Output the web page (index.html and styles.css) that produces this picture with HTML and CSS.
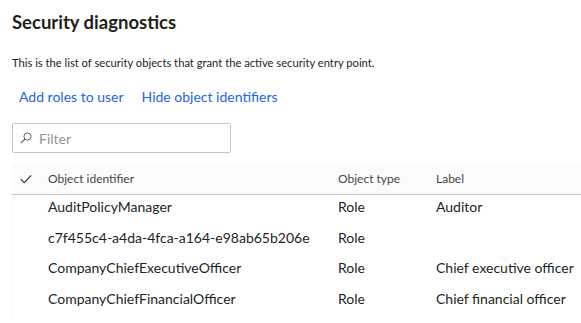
FILE: index.html
```html
<!DOCTYPE html>
<html lang="en">
  <head>
    <meta charset="UTF-8" />
    <title>Security diagnostics</title>
    <link rel="stylesheet" href="styles.css">
  </head>
  <body>
    <div class="page">
      <h1 class="title">Security diagnostics</h1>
      <p class="intro">This is the list of security objects that grant the active security entry point.</p>

      <div class="actions">
        <a class="action" href="#">Add roles to user</a>
        <a class="action" href="#">Hide object identifiers</a>
      </div>

      <label class="filter">
        <svg class="filter-icon" width="12" height="12" viewBox="0 0 12 12">
          <circle cx="7.5" cy="4.5" r="3.6" fill="none" stroke="#605e5c" stroke-width="1" />
          <path d="M5 7 L0.8 11.2" stroke="#605e5c" stroke-width="1.1" />
        </svg>
        <input type="text" placeholder="Filter" />
      </label>

      <div class="grid">
        <div class="grid-head">
          <span class="col-check">
            <svg width="12" height="10" viewBox="0 0 12 10">
              <path d="M0.8 5.2 L4.2 8.6 L11.2 1.4" fill="none" stroke="#323130" stroke-width="1.1" />
            </svg>
          </span>
          <span class="col-id">Object identifier</span>
          <span class="col-type">Object type</span>
          <span class="col-label">Label</span>
        </div>
        <div class="grid-body">
          <div class="grid-row">
            <span class="col-check"></span>
            <span class="col-id">AuditPolicyManager</span>
            <span class="col-type">Role</span>
            <span class="col-label">Auditor</span>
          </div>
          <div class="grid-row">
            <span class="col-check"></span>
            <span class="col-id">c7f455c4-a4da-4fca-a164-e98ab65b206e</span>
            <span class="col-type">Role</span>
            <span class="col-label"></span>
          </div>
          <div class="grid-row">
            <span class="col-check"></span>
            <span class="col-id">CompanyChiefExecutiveOfficer</span>
            <span class="col-type">Role</span>
            <span class="col-label">Chief executive officer</span>
          </div>
          <div class="grid-row">
            <span class="col-check"></span>
            <span class="col-id">CompanyChiefFinancialOfficer</span>
            <span class="col-type">Role</span>
            <span class="col-label">Chief financial officer</span>
          </div>
        </div>
      </div>
    </div>
  </body>
</html>
```

FILE: styles.css
```css
html,
body {
  margin: 0;
  background: #ffffff;
  font-family: "Segoe UI", Lato, sans-serif;
  color: #201f1e;
  overflow: hidden;
}

.page {
  padding: 9px 0 0 12px;
}

.title {
  margin: 0;
  font-size: 18.5px;
  font-weight: 700;
  line-height: 26px;
  color: #201f1e;
}

.intro {
  margin: 20px 0 0;
  font-size: 11.2px;
  line-height: 16px;
}

.actions {
  display: flex;
  gap: 18px;
  margin: 16px 0 0 7px;
}

.action {
  font-size: 14px;
  line-height: 20px;
  color: #2266e3;
  text-decoration: none;
}

.filter {
  display: flex;
  align-items: center;
  width: 217px;
  height: 28px;
  margin-top: 16px;
  border: 1px solid #c8c6c4;
  border-radius: 2px;
}

.filter-icon {
  margin: 0 0 0 7px;
}

.filter input {
  border: none;
  outline: none;
  flex: 1;
  min-width: 0;
  margin-left: 7px;
  padding: 0;
  font: 14px "Segoe UI", Lato, sans-serif;
  color: #201f1e;
  background: transparent;
}

.filter input::placeholder {
  color: #979593;
}

.grid {
  margin-top: 10px;
}

.grid-head,
.grid-row {
  display: flex;
}

.grid-head {
  align-items: center;
  height: 31px;
  background: #fbfbfb;
  border-bottom: 1px solid #c8c6c4;
  font-size: 12px;
  color: #484644;
}

.grid-body {
  border-left: 1px solid #f6f6f6;
}

.grid-row {
  align-items: flex-start;
  height: 30.67px;
  box-sizing: border-box;
  padding-top: 2px;
  font-size: 14px;
  line-height: 20px;
  color: #201f1e;
}

.col-check {
  display: flex;
  width: 36px;
  padding-left: 8px;
  box-sizing: border-box;
}

.grid-body .col-check {
  width: 35px;
}

.col-id {
  width: 290px;
  white-space: nowrap;
}

.col-type {
  width: 98px;
}

.col-label {
  flex: 1;
  white-space: nowrap;
}
```
